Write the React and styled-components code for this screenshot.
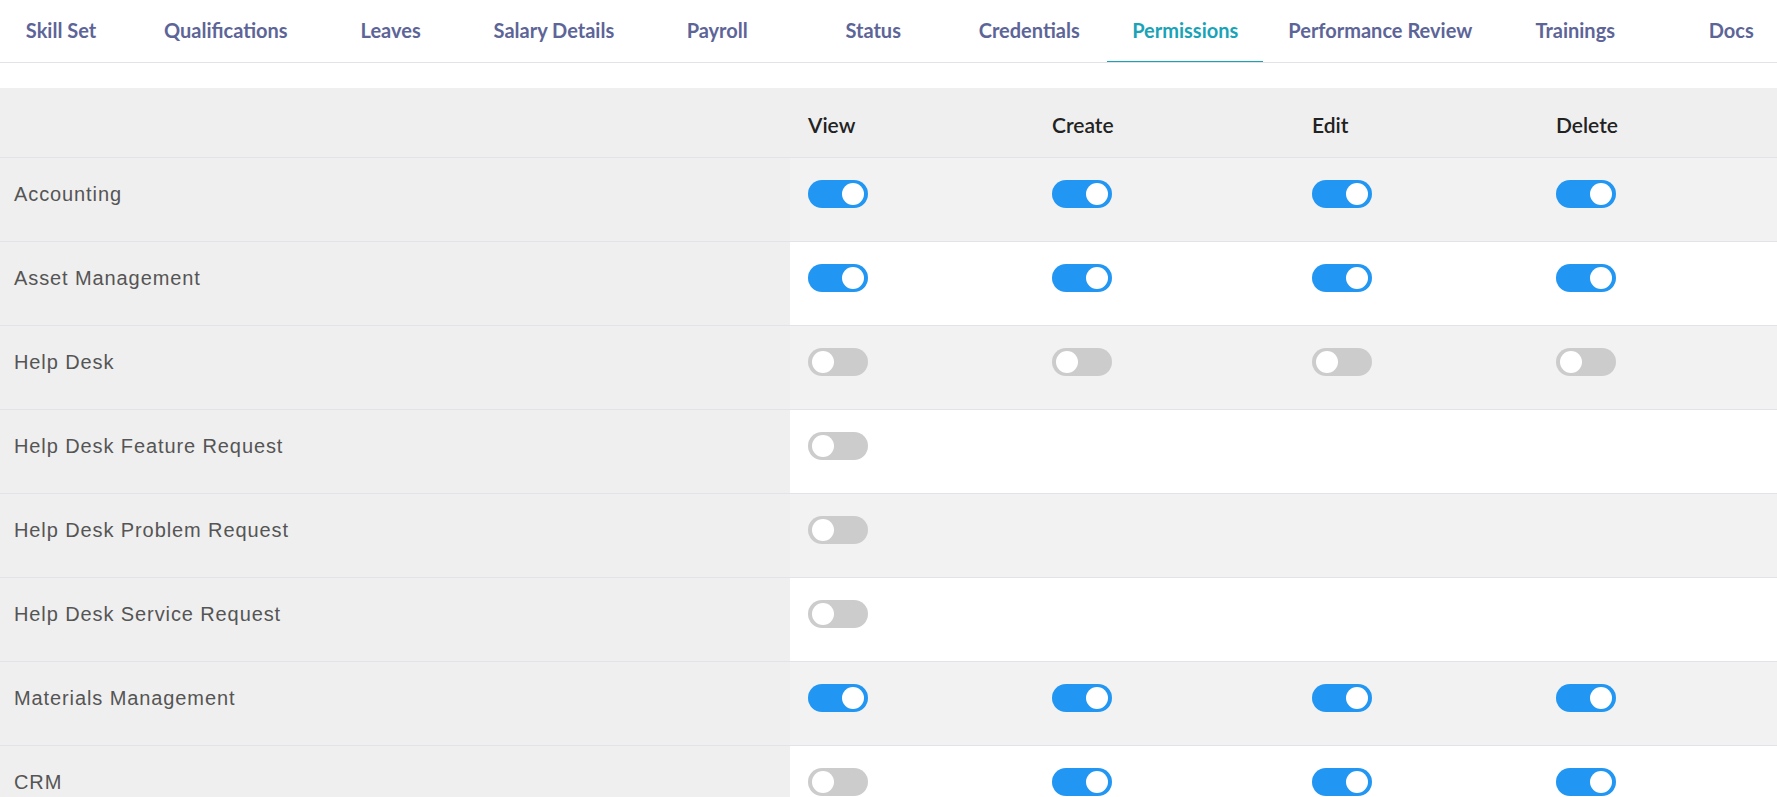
import React from "react";
import styled, { createGlobalStyle, css } from "styled-components";

const GlobalStyle = createGlobalStyle`
  * { box-sizing: border-box; }
  html, body { margin: 0; padding: 0; background: #ffffff; }
  body { font-family: "Lato", "Liberation Sans", sans-serif; }
`;

const Page = styled.div`
  height: 100vh;
  overflow: hidden;
  background: #ffffff;
`;

const TabBar = styled.nav`
  height: 63px;
  border-bottom: 1px solid #e2e2e8;
  overflow: hidden;
`;

const TabTrack = styled.div`
  display: flex;
  margin-left: -17px;
  height: 100%;
`;

const Tab = styled.div`
  position: relative;
  flex: none;
  min-width: 156px;
  padding: 0 25px 2px;
  height: 100%;
  display: flex;
  align-items: center;
  justify-content: center;
  font-family: "Lato", sans-serif;
  font-weight: 700;
  font-size: 20px;
  color: ${(p) => (p.$active ? "#1aa3b7" : "#5d6598")};
  white-space: nowrap;
  ${(p) =>
    p.$active &&
    css`
      &::after {
        content: "";
        position: absolute;
        left: 0;
        right: 0;
        bottom: -1px;
        height: 2px;
        background: #1aa3b7;
      }
    `}
`;

const Table = styled.div`
  margin-top: 25px;
`;

/* module name, then View / Create / Edit / Delete */
const columns = "790px 244px 260px 244px 1fr";

const HeadRow = styled.div`
  display: grid;
  grid-template-columns: ${columns};
  height: 70px;
  background: #efefef;
  border-bottom: 1px solid #e2e2e8;
`;

const HeadCell = styled.div`
  padding: 24px 0 0 18px;
  font-family: "Lato", sans-serif;
  font-weight: 600;
  font-size: 21px;
  line-height: 1.2;
  color: #222222;
`;

const Row = styled.div`
  display: grid;
  grid-template-columns: ${columns};
  grid-template-rows: 1fr;
  height: 84px;
  border-bottom: 1px solid #e2e2e8;
  background: ${(p) => (p.$striped ? "#f2f2f2" : "#ffffff")};
`;

const LabelCell = styled.div`
  background: #efefef;
  padding: 22px 0 0 14px;
  font-family: "Liberation Sans", Arial, sans-serif;
  font-size: 20px;
  letter-spacing: 0.9px;
  line-height: 28px;
  color: #555555;
`;

const Cell = styled.div`
  padding: 22px 0 0 18px;
`;

const Switch = styled.span`
  position: relative;
  display: block;
  width: 60px;
  height: 28px;
  border-radius: 14px;
  background: ${(p) => (p.$on ? "#2196f3" : "#cccccc")};

  &::after {
    content: "";
    position: absolute;
    top: 3px;
    left: ${(p) => (p.$on ? "34px" : "4px")};
    width: 22px;
    height: 22px;
    border-radius: 50%;
    background: #ffffff;
  }
`;

const tabs = [
  "Skill Set",
  "Qualifications",
  "Leaves",
  "Salary Details",
  "Payroll",
  "Status",
  "Credentials",
  "Permissions",
  "Performance Review",
  "Trainings",
  "Docs",
];

const actions = ["View", "Create", "Edit", "Delete"];

// null = the module has no such permission
const modules = [
  { name: "Accounting", perms: [true, true, true, true] },
  { name: "Asset Management", perms: [true, true, true, true] },
  { name: "Help Desk", perms: [false, false, false, false] },
  { name: "Help Desk Feature Request", perms: [false, null, null, null] },
  { name: "Help Desk Problem Request", perms: [false, null, null, null] },
  { name: "Help Desk Service Request", perms: [false, null, null, null] },
  { name: "Materials Management", perms: [true, true, true, true] },
  { name: "CRM", perms: [false, true, true, true] },
];

export default function App() {
  return (
    <Page>
      <GlobalStyle />
      <TabBar>
        <TabTrack>
          {tabs.map((t) => (
            <Tab key={t} $active={t === "Permissions"}>
              {t}
            </Tab>
          ))}
        </TabTrack>
      </TabBar>
      <Table>
        <HeadRow>
          <HeadCell />
          {actions.map((a) => (
            <HeadCell key={a}>{a}</HeadCell>
          ))}
        </HeadRow>
        {modules.map((m, i) => (
          <Row key={m.name} $striped={i % 2 === 0}>
            <LabelCell>{m.name}</LabelCell>
            {m.perms.map((p, j) => (
              <Cell key={j}>{p !== null && <Switch $on={p} />}</Cell>
            ))}
          </Row>
        ))}
      </Table>
    </Page>
  );
}
